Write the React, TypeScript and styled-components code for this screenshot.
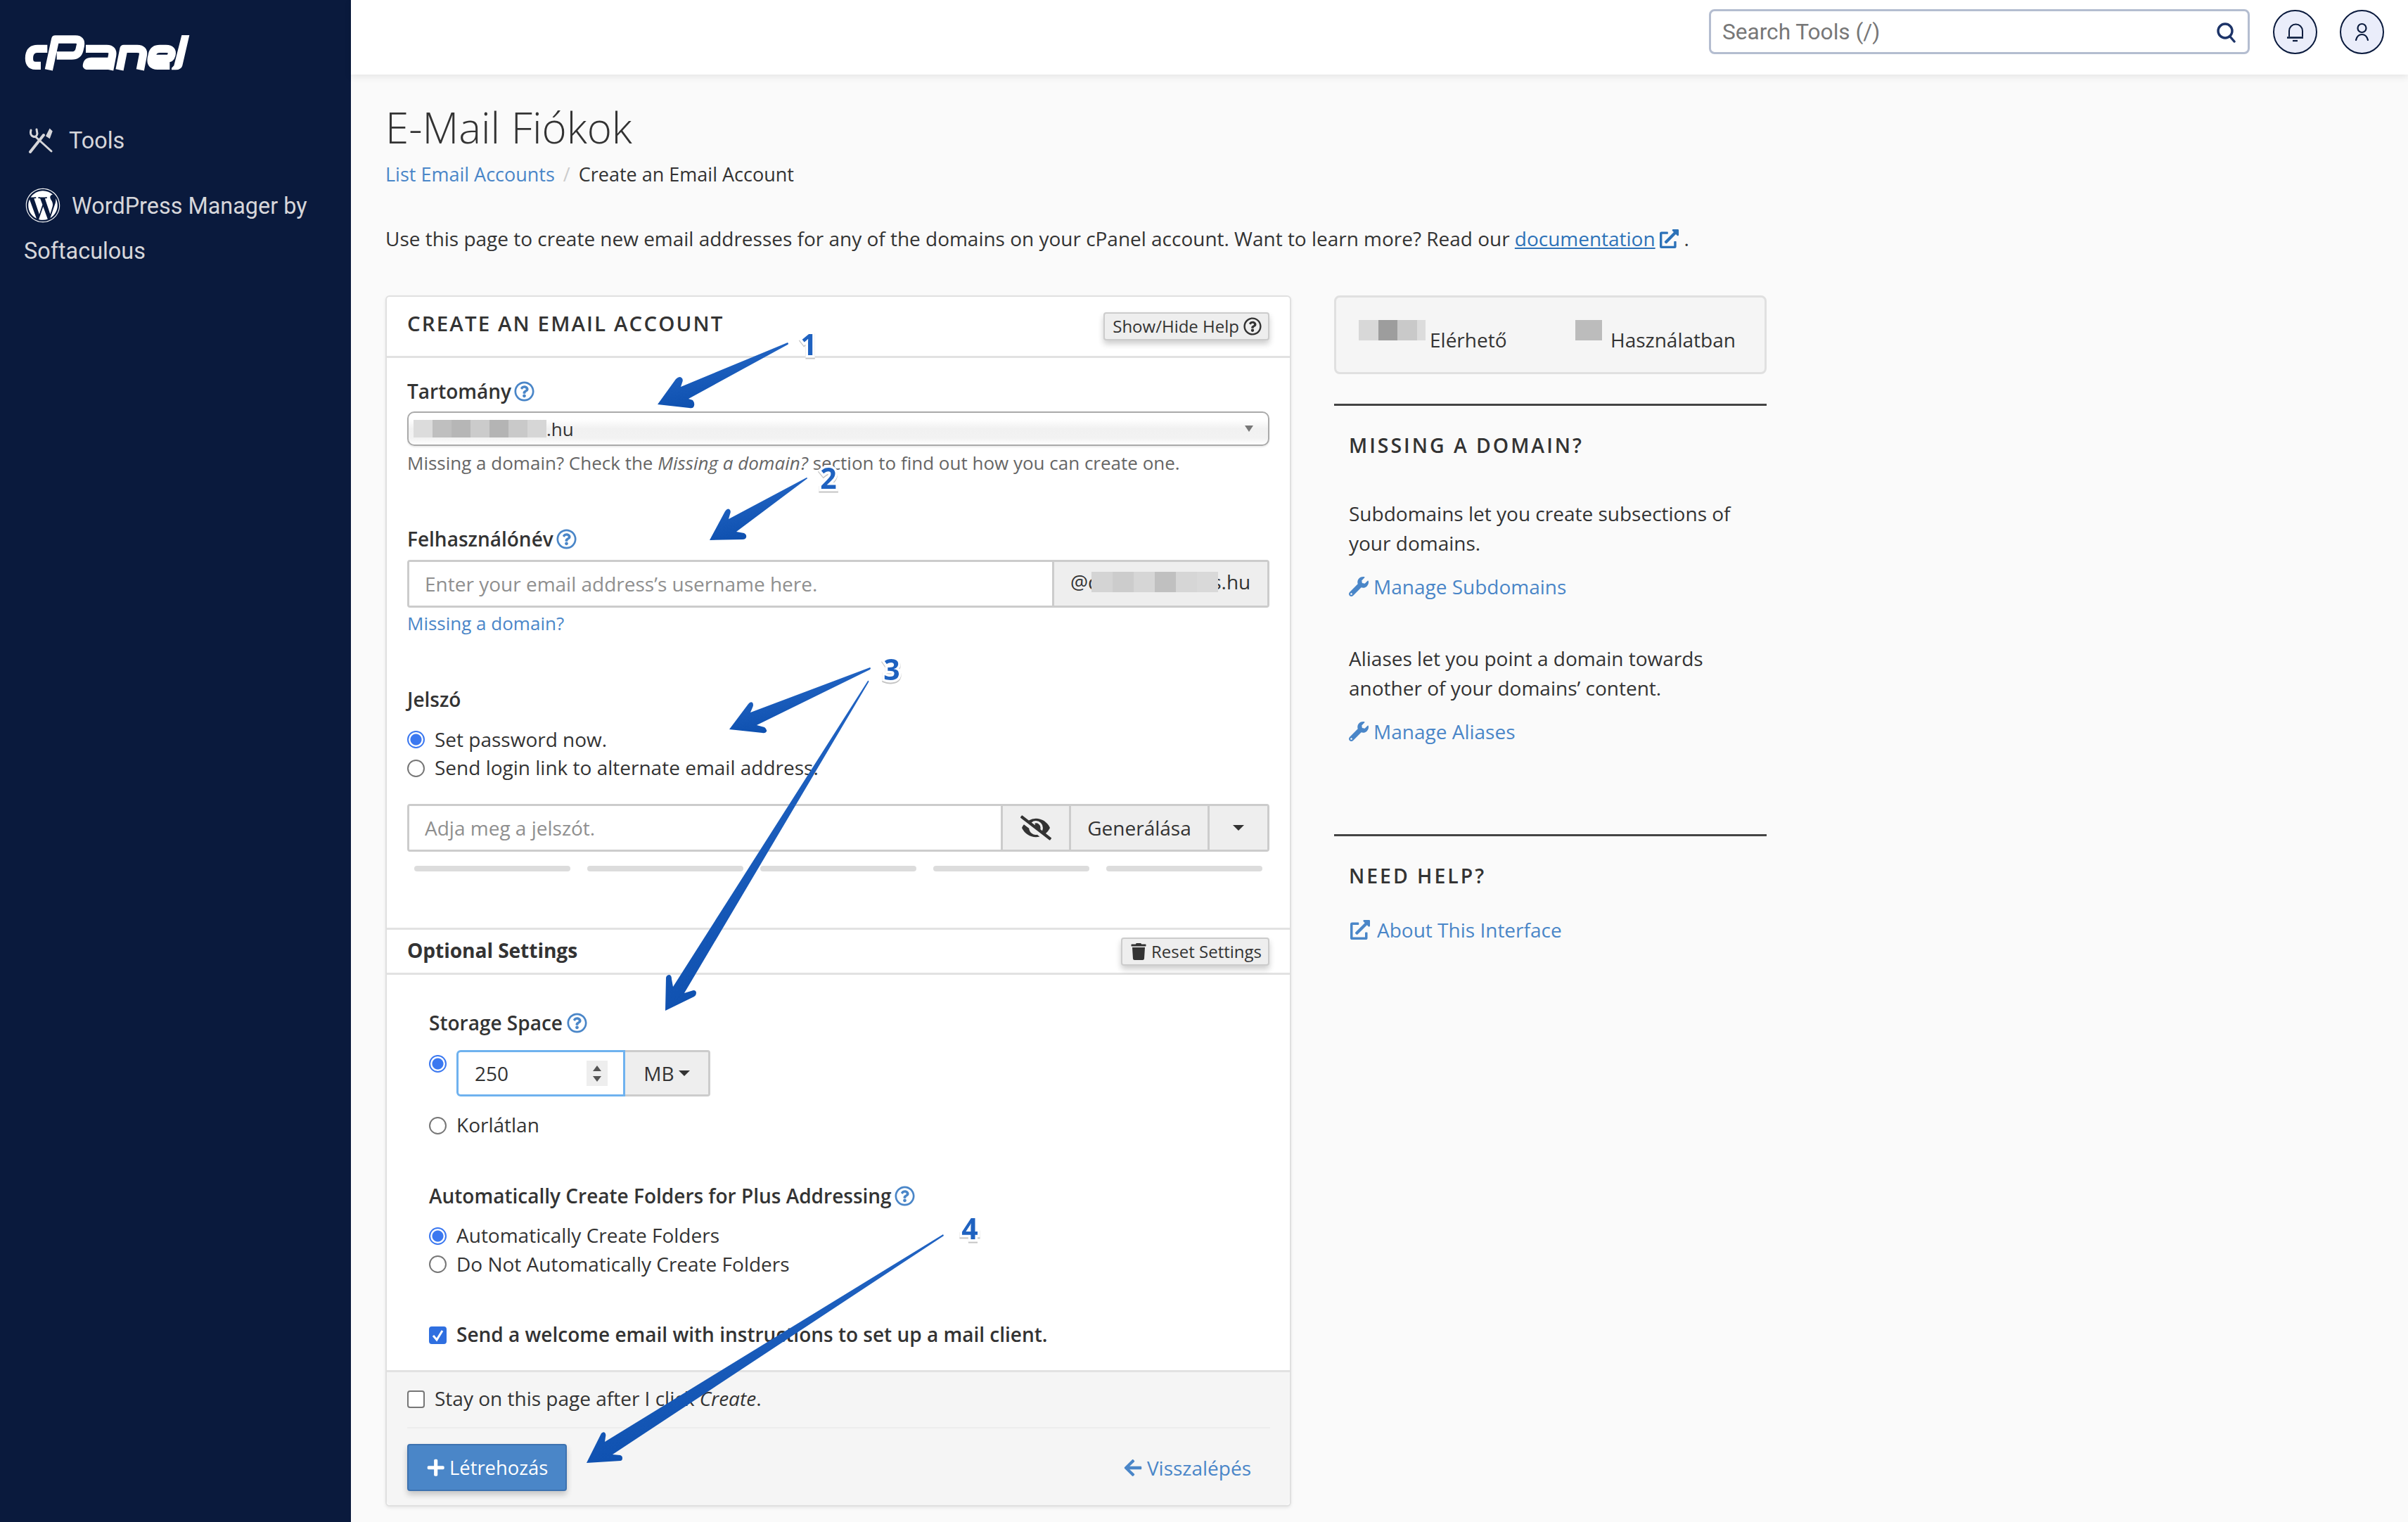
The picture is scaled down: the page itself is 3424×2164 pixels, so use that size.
import React from "react";
import styled, { createGlobalStyle } from "styled-components";
import { FaWordpress, FaRegQuestionCircle, FaTrash, FaWrench, FaExternalLinkAlt, FaEyeSlash, FaArrowLeft, FaPlus } from "react-icons/fa";

const Global = createGlobalStyle`
  html, body { margin: 0; padding: 0; background: #fafafa; }
  body { font-family: "Open Sans", "Liberation Sans", sans-serif; font-size: 28px; line-height: 40px; color: #333; }
  * { box-sizing: border-box; }
`;

const Shell = styled.div`position: relative; display: flex; width: 3424px; height: 2164px; overflow: hidden;`;

const Sidebar = styled.nav`
  width: 499px; flex: none; background: #0a1a3d; color: #d6d6da;
  font-family: Roboto, "Liberation Sans", sans-serif; font-size: 32.4px; padding: 50px 34px 0;
`;
const Logo = styled.svg`display: block; margin-left: -14px; margin-top: -20px;`;
const ToolsItem = styled.div`display: flex; align-items: center; gap: 22px; margin-top: 60px; padding-left: 6px; height: 40px;`;
const WpItem = styled.div`margin-top: 41px; line-height: 64px; margin-right: -20px;`;
const WpIcon = styled(FaWordpress)`font-size: 50px; vertical-align: -13px; margin-left: 2px; margin-right: 16px; color: #fff;`;

const Main = styled.div`flex: 1; min-width: 0; display: flex; flex-direction: column;`;
const TopBar = styled.header`
  height: 106px; flex: none; background: #fff; box-shadow: 0 3px 10px rgba(0,0,0,.09);
  display: flex; align-items: center; justify-content: flex-end; gap: 32px; padding: 0 34px 16px 0; position: relative;
`;
const SearchBox = styled.div`
  width: 769px; height: 64px; border: 3px solid #b4bdd0; border-radius: 8px; background: #fff; margin-right: 1px;
  display: flex; align-items: center; justify-content: space-between; padding: 2px 17px 0 16px;
  font-family: Roboto, "Liberation Sans", sans-serif; font-size: 31.6px; color: #777;
`;
const Round = styled.svg`display: block;`;

const Content = styled.main`padding: 40px 0 0 49px;`;
const Title = styled.h1`margin: 0; font-weight: 300; font-size: 60px; line-height: 70px; color: #333;`;
const Crumbs = styled.div`margin-top: 12px; display: flex; align-items: center; gap: 12px; font-size: 27px;`;
const Link = styled.a`color: #4a86c8; text-decoration: none;`;
const BlockLink = styled(Link)`display: block; font-size: 26px; margin-top: 2px;`;
const Sep = styled.span`color: #ccc;`;
const Intro = styled.p`margin: 51px 0 0; font-size: 27.97px;`;
const DocLink = styled.a`color: #2d72b8; text-decoration: underline;`;
const DocIcon = styled(FaExternalLinkAlt)`color: #2d72b8; font-size: 27px; margin: 0 8px 0 6px; vertical-align: -3px;`;

const Columns = styled.div`display: flex; gap: 61px; margin-top: 61px; align-items: flex-start;`;
const Panel = styled.section`
  width: 1288px; height: 1722px; background: #fff; border: 2px solid #e0e0e0; border-radius: 6px;
  box-shadow: 0 2px 4px rgba(0,0,0,.08); display: flex; flex-direction: column;
`;
const PanelHead = styled.div`
  height: 87px; flex: none; border-bottom: 3px solid #e2e2e2; display: flex; align-items: center; justify-content: space-between;
  padding: 0 29px 0 29px;
`;
const PanelTitle = styled.h2`margin: 0 0 9px; font-size: 29.5px; font-weight: 600; letter-spacing: 2.1px;`;
const SmallBtn = styled.button`
  font-family: inherit; font-size: 24px; color: #333; background: #eee; border: 2px solid #ccc; border-radius: 4px;
  box-shadow: 0 5px 9px rgba(0,0,0,.2); padding: 0 9px 0 11px; display: flex; align-items: center; gap: 6px; line-height: 36px;
`;
const HelpGlyph = styled(FaRegQuestionCircle)`font-size: 26px;`;

const Body = styled.div`padding: 27px 29px 0 29px;`;
const Label = styled.label`display: flex; align-items: center; gap: ${p => p.$g ?? 4}px; font-weight: 600; margin-top: ${p => p.$top ?? 0}px;`;
const Help = styled(FaRegQuestionCircle)`color: #4a86c8; font-size: 29px;`;
const SelectBox = styled.div`
  margin-top: 9px; height: 49px; border: 2px solid #aaa; border-radius: 10px; padding: 0 0 0 7px; display: flex; align-items: center; position: relative;
  background: linear-gradient(#fff 20%, #f1f1f1 50%, #f2f2f2 80%, #fff);
  box-shadow: 0 2px 2px rgba(0,0,0,.08); font-size: 26px;
`;
const SelectCaret = styled.span`
  position: absolute; right: 21px; top: 18px; width: 0; height: 0;
  border-left: 6px solid transparent; border-right: 6px solid transparent; border-top: 9px solid #777;
`;
const Blur = styled.span`display: inline-flex; flex: none; margin: ${p => p.$m ?? "0"}; position: relative;`;
const Pixel = styled.span`display: block; flex: none; width: ${p => p.$w ?? 27}px; height: ${p => p.$h ?? 25}px; background: ${p => p.$c};`;
const Muted = styled.p`margin: 4px 0 0; color: #666; font-size: 26px;`;
const InputGroup = styled.div`
  display: flex; height: 68px; margin-top: ${p => p.$top ?? 8}px; border: 3px solid #ccc; border-radius: 4px; background: #fff; overflow: hidden;
`;
const TextField = styled.input`
  flex: 1; min-width: 0; border: 0; outline: 0; padding: 0 22px; font: inherit; background: #fff; color: #333;
  &::placeholder { color: #8f8f8f; opacity: 1; }
`;
const Addon = styled.div`
  flex: none; width: ${p => p.$w}px; background: #eee; border-left: 3px solid #ccc; display: flex; align-items: center; justify-content: center; color: #333;
`;
const AddonText = styled.div`
  flex: none; width: 306px; background: #eee; border-left: 3px solid #ccc; display: flex; align-items: center; padding: 0 0 6px 23px; color: #333; overflow: hidden;
`;
const AddonTail = styled.span`margin-left: -9px;`;
const EyeIcon = styled(FaEyeSlash)`font-size: 44px; color: #333;`;
const Caret = styled.span`
  display: inline-block; width: 0; height: 0; margin-left: ${p => p.$ml ?? 0}px;
  border-left: ${p => p.$s ?? 8}px solid transparent; border-right: ${p => p.$s ?? 8}px solid transparent; border-top: ${p => p.$s ?? 8}px solid #333;
`;
const Choice = styled.label`display: flex; align-items: center; gap: 14px; height: ${p => p.$h ?? 41}px; margin-top: ${p => p.$top ?? 0}px; font-weight: ${p => p.$bold ? 600 : 400};`;
const Radio = styled.input.attrs({ type: "radio" })`
  appearance: none; margin: 2px 0 0; flex: none; width: 25px; height: 25px; border-radius: 50%; border: 2px solid #767676; background: #fff;
  &:checked { border-color: #3b78f0; background: radial-gradient(circle, #3b78f0 0 7.5px, #fff 8.5px); }
`;
const Check = styled.span`
  flex: none; margin-top: 2px; width: 25px; height: 25px; border-radius: 4px; border: 2px solid #767676; background: #fff; display: flex; align-items: center; justify-content: center;
`;
const CheckOn = styled(Check)`border-color: #2f6fe0; background: #2f6fe0;`;
const Bars = styled.div`display: grid; grid-template-columns: repeat(5, 222px); gap: 24px; margin: 20px 0 0 10px;`;
const Bar = styled.span`display: block; height: 8px; border-radius: 4px; background: #dcdcdc;`;
const SectionHead = styled.div`
  margin-top: 80px; height: 67px; flex: none; border-top: 3px solid #e2e2e2; border-bottom: 3px solid #e2e2e2; display: flex; align-items: center; justify-content: space-between;
  padding: 0 29px 0 29px;
`;
const SectionTitle = styled.h3`margin: 0 0 3px; font-size: 28.2px; font-weight: 700; letter-spacing: -0.1px;`;
const Sub = styled.div`padding: 48px 30px 0 60px; flex: 1;`;
const Storage = styled.div`display: flex; margin-top: 19px; height: 66px;`;
const TopRadio = styled(Radio)`margin: 7px 14px 0 0;`;
const NumberBox = styled.div`
  width: 240px; height: 66px; border: 3px solid #6fb2ef; border-radius: 6px 0 0 6px; display: flex; align-items: center; justify-content: space-between; padding: 0 22px 0 23px; background: #fff;
`;
const Spinner = styled.span`width: 30px; height: 36px; background: #eee; display: flex; flex-direction: column; align-items: center; justify-content: center; gap: 7px;`;
const SpinUp = styled.i`display: block; width: 0; height: 0; border-left: 6px solid transparent; border-right: 6px solid transparent; border-bottom: 8px solid #555;`;
const SpinDown = styled.i`display: block; width: 0; height: 0; border-left: 6px solid transparent; border-right: 6px solid transparent; border-top: 8px solid #555;`;
const UnitBtn = styled.div`
  width: 121px; height: 66px; background: #eee; border: 3px solid #ccc; border-left: 0; border-radius: 0 4px 4px 0; display: flex; align-items: center; justify-content: center; color: #333;
`;
const Footer = styled.div`
  background: #f5f5f5; border-top: 3px solid #e2e2e2; height: 192px; flex: none; padding: 17px 28px 0 29px; border-radius: 0 0 6px 6px;
`;
const FootRule = styled.div`height: 2px; background: #ededed; margin-top: 21px;`;
const FootRow = styled.div`display: flex; align-items: center; justify-content: space-between; margin-top: 22px; padding-right: 27px;`;
const PrimaryBtn = styled.button`
  height: 67px; width: 227px; font: inherit; font-size: 27.4px; color: #fff; background: #4a86c8; border: 2px solid #3d72b0; border-radius: 4px; box-shadow: 0 5px 9px rgba(0,0,0,.2);
  display: flex; align-items: center; justify-content: center; gap: 6px;
`;
const BackLink = styled(Link)`display: flex; align-items: center; gap: 6px;`;

const Side = styled.aside`width: 615px; flex: none;`;
const StatBox = styled.div`
  height: 112px; background: #f5f5f5; border: 3px solid #e0e0e0; border-radius: 8px; padding: 32px 0 0 32px; display: flex;
`;
const Stat = styled.div`display: flex; align-items: flex-start; width: ${p => p.$w}px; gap: ${p => p.$g}px;`;
const StatText = styled.span`margin-top: 8px;`;
const Rule = styled.hr`margin: ${p => p.$top}px 0 0; border: 0; height: 3px; background: #444;`;
const SideSection = styled.div`padding-left: 21px;`;
const SideHead = styled.h4`margin: 36px 0 0; font-size: 28.4px; font-weight: 600; letter-spacing: 3px;`;
const SideText = styled.p`margin: ${p => p.$top}px 0 0; line-height: 42px;`;
const SideLink = styled(Link)`display: flex; align-items: center; gap: ${p => p.$g ?? 7}px; margin-top: ${p => p.$top}px;`;
const Wrench = styled(FaWrench)`font-size: 28px;`;
const AboutIcon = styled(FaExternalLinkAlt)`margin-left: 2px;`;

const Overlay = styled.svg`position: absolute; left: 0; top: 0; pointer-events: none;`;
const Num = styled.span`
  position: absolute; left: ${p => p.$x}px; top: ${p => p.$y}px; font-size: 41px; line-height: 40px; font-weight: 700; color: #1f62c0;
  -webkit-text-stroke: 7px #fff; paint-order: stroke fill; filter: drop-shadow(0 2px 0 #c4c4c4); transform: translate(-50%, -50%);
`;

const blurA = ["#dcdcdc", "#bfbfbf", "#b6b6b6", "#cbcbcb", "#b4b4b4", "#c9c9c9", "#d6d6d6"];
const blurB = ["#d4d4d4", "#cccccc", "#d6d6d6", "#c0c0c0", "#d6d6d6", "#d9d9d9"];

const Qmark = () => <Help />;

const Arrows = () => (
  <Overlay width={3424} height={2164} viewBox="0 0 3424 2164">
    <defs>
      <linearGradient id="arrowFill" x1="0" y1="0" x2="0.35" y2="1">
        <stop offset="0" stopColor="#2a6ccb" />
        <stop offset="1" stopColor="#0d4fae" />
      </linearGradient>
    </defs>
    <g fill="url(#arrowFill)">
      <path d="M1120 487 Q1122 489 1120 490 L979 567 L985 569 Q989 574 986 579 Q984 581 980 580 L935 575 L961 539 Q966 534 969 537 Q972 539 970 544 L968 550 Z" />
      <path d="M1147 679 Q1149 680 1147 681 L1047 756 L1058 758 Q1062 760 1061 764 Q1060 767 1056 767 L1009 768 L1031 727 Q1034 722 1037 724 Q1040 726 1038 731 L1036 738 Z" />
      <path d="M1237 949 Q1239 950 1237 952 L1076 1031 L1087 1034 Q1091 1037 1090 1040 Q1088 1043 1084 1042 L1037 1037 L1064 1001 Q1067 997 1070 999 Q1072 1002 1070 1006 L1067 1013 Z" />
      <path d="M1234 968 Q1236 967 1235 970 L973 1412 L986 1408 Q990 1408 990 1412 Q990 1415 987 1417 L946 1437 L947 1390 Q948 1386 952 1386 Q955 1387 955 1392 L957 1403 Z" />
      <path d="M1341 1755 L1342 1757 L871 2068 L882 2069 Q885 2070 885 2073 Q885 2077 882 2077 L834 2080 L855 2038 Q858 2035 860 2037 Q862 2039 861 2043 L860 2050 Z" />
    </g>
  </Overlay>
);

export default function App() {
  return (
    <Shell>
      <Global />
      <Sidebar>
        <Logo width={270} height={90} viewBox="0 0 810 270">
          <g fill="none" stroke="#fff" strokeWidth="34" strokeLinejoin="round">
            <path d="M142 118 H100 Q70 118 65 148 Q60 190 92 190 H114" />
            <path d="M148 208 L176 78 H262 Q288 78 283 104 L279 122 Q273 147 246 147 H182" />
            <path d="M306 118 H395 Q424 118 419 146 L407 208 M404 172 H330 Q312 172 310 190 H404" />
            <path d="M450 208 L468 118 H525 Q556 118 550 146 L538 208" />
            <path d="M664 190 H612 Q580 190 586 158 L590 140 Q596 118 622 118 H648 Q678 118 672 144 Q668 160 652 160 H592" />
          </g>
          <path d="M715 60 H748 L718 190 Q712 208 690 208 H672 V200 L682 190 Z" fill="#fff" />
        </Logo>
        <ToolsItem>
          <svg width="36" height="36" viewBox="0 0 36 36" fill="none" stroke="#d6d6da" strokeWidth="3" strokeLinecap="round">
            <path d="M10 12 L33 33" />
            <path d="M4 3 Q2 10 7 12 Q12 14 13 8 L12 2" />
            <path d="M3 34 L22 10" strokeWidth="4" />
            <path d="M27 11 L31 3 L33 5 L30 13 Z" fill="#d6d6da" />
          </svg>
          Tools
        </ToolsItem>
        <WpItem><WpIcon />WordPress Manager by Softaculous</WpItem>
      </Sidebar>
      <Main>
        <TopBar>
          <SearchBox>
            Search Tools (/)
            <svg width="28" height="30" viewBox="0 0 28 30" fill="none" stroke="#1d3468" strokeWidth="3.4" strokeLinecap="round">
              <circle cx="13" cy="13" r="10" />
              <path d="M20 21 L26 28" />
            </svg>
          </SearchBox>
          <Round width="63" height="63" viewBox="0 0 63 63" fill="none" stroke="#0a1a3d" strokeWidth="2">
            <circle cx="31.5" cy="31.5" r="30.5" fill="#eaedfa" />
            <path d="M23 38 V30 A9.5 9.5 0 0 1 42 30 V38" />
            <path d="M20 39.5 H43" strokeWidth="2.6" />
            <path d="M28 44 H35" strokeWidth="2.2" />
          </Round>
          <Round width="63" height="63" viewBox="0 0 63 63" fill="none" stroke="#0a1a3d" strokeWidth="2">
            <circle cx="31.5" cy="31.5" r="30.5" fill="#eaedfa" />
            <circle cx="31.5" cy="26" r="6" strokeWidth="2.2" />
            <path d="M23 43 Q25 35 31.5 35 Q38 35 40 43" strokeWidth="2.2" strokeLinecap="round" />
          </Round>
        </TopBar>
        <Content>
          <Title>E-Mail Fiókok</Title>
          <Crumbs><Link href="#">List Email Accounts</Link><Sep>/</Sep><span>Create an Email Account</span></Crumbs>
          <Intro>
            Use this page to create new email addresses for any of the domains on your cPanel account. Want to learn more? Read our{" "}
            <DocLink href="#">documentation</DocLink><DocIcon />.
          </Intro>
          <Columns>
            <Panel>
              <PanelHead>
                <PanelTitle>CREATE AN EMAIL ACCOUNT</PanelTitle>
                <SmallBtn>Show/Hide Help <HelpGlyph /></SmallBtn>
              </PanelHead>
              <Body>
                <Label>Tartomány <Qmark /></Label>
                <SelectBox>
                  <Blur>{blurA.map((c, i) => <Pixel key={i} $c={c} />)}</Blur>
                  <span>.hu</span>
                  <SelectCaret />
                </SelectBox>
                <Muted>Missing a domain? Check the <em>Missing a domain?</em> section to find out how you can create one.</Muted>
                <Label $top={68}>Felhasználónév <Qmark /></Label>
                <InputGroup $top={10}>
                  <TextField placeholder="Enter your email address’s username here." />
                  <AddonText>
                    @d
                    <Blur $m="0 0 0 -12px">{blurB.map((c, i) => <Pixel key={i} $c={c} $w={30} $h={29} />)}</Blur>
                    <AddonTail>s.hu</AddonTail>
                  </AddonText>
                </InputGroup>
                <BlockLink href="#">Missing a domain?</BlockLink>
                <Label $top={68}>Jelszó</Label>
                <Choice $top={16}><Radio name="pw" defaultChecked />Set password now.</Choice>
                <Choice $h={40}><Radio name="pw" />Send login link to alternate email address.</Choice>
                <InputGroup $top={32}>
                  <TextField placeholder="Adja meg a jelszót." />
                  <Addon $w={97}><EyeIcon /></Addon>
                  <Addon $w={197}>Generálása</Addon>
                  <Addon $w={85}><Caret /></Addon>
                </InputGroup>
                <Bars><Bar /><Bar /><Bar /><Bar /><Bar /></Bars>
              </Body>
              <SectionHead>
                <SectionTitle>Optional Settings</SectionTitle>
                <SmallBtn><FaTrash />Reset Settings</SmallBtn>
              </SectionHead>
              <Sub>
                <Label $g={6}>Storage Space <Qmark /></Label>
                <Storage>
                  <TopRadio name="q" defaultChecked />
                  <NumberBox>250<Spinner><SpinUp /><SpinDown /></Spinner></NumberBox>
                  <UnitBtn>MB<Caret $ml={6} /></UnitBtn>
                </Storage>
                <Choice $top={20} $h={40}><Radio name="q" />Korlátlan</Choice>
                <Label $top={61}>Automatically Create Folders for Plus Addressing <Qmark /></Label>
                <Choice $top={16} $h={40}><Radio name="f" defaultChecked />Automatically Create Folders</Choice>
                <Choice><Radio name="f" />Do Not Automatically Create Folders</Choice>
                <Choice $top={60} $h={40} $bold>
                  <CheckOn>
                    <svg width="19" height="19" viewBox="0 0 19 19" fill="none" stroke="#fff" strokeWidth="3"><path d="M3 10 L8 16 L16 3" /></svg>
                  </CheckOn>
                  Send a welcome email with instructions to set up a mail client.
                </Choice>
              </Sub>
              <Footer>
                <Choice $h={40}><Check /><span>Stay on this page after I click <em>Create</em>.</span></Choice>
                <FootRule />
                <FootRow>
                  <PrimaryBtn><FaPlus />Létrehozás</PrimaryBtn>
                  <BackLink href="#"><FaArrowLeft />Visszalépés</BackLink>
                </FootRow>
              </Footer>
            </Panel>
            <Side>
              <StatBox>
                <Stat $w={308} $g={6}>
                  <Blur><Pixel $c="#d8d8d8" $w={28} $h={29} /><Pixel $c="#9d9d9d" $h={29} /><Pixel $c="#c9c9c9" $w={28} $h={29} /><Pixel $c="#dcdcdc" $w={12} $h={29} /></Blur>
                  <StatText>Elérhető</StatText>
                </Stat>
                <Stat $w={240} $g={12}>
                  <Pixel $c="#bcbcbc" $w={38} $h={29} />
                  <StatText>Használatban</StatText>
                </Stat>
              </StatBox>
              <Rule $top={42} />
              <SideSection>
                <SideHead>MISSING A DOMAIN?</SideHead>
                <SideText $top={56}>Subdomains let you create subsections of your domains.</SideText>
                <SideLink href="#" $top={21}><Wrench />Manage Subdomains</SideLink>
                <SideText $top={61}>Aliases let you point a domain towards another of your domains’ content.</SideText>
                <SideLink href="#" $top={21}><Wrench />Manage Aliases</SideLink>
              </SideSection>
              <Rule $top={126} />
              <SideSection>
                <SideHead>NEED HELP?</SideHead>
                <SideLink href="#" $top={37} $g={10}><AboutIcon />About This Interface</SideLink>
              </SideSection>
            </Side>
          </Columns>
        </Content>
      </Main>
      <Arrows />
      <Num $x={1150} $y={489}>1</Num>
      <Num $x={1178} $y={679}>2</Num>
      <Num $x={1268} $y={951}>3</Num>
      <Num $x={1379} $y={1746}>4</Num>
    </Shell>
  );
}
